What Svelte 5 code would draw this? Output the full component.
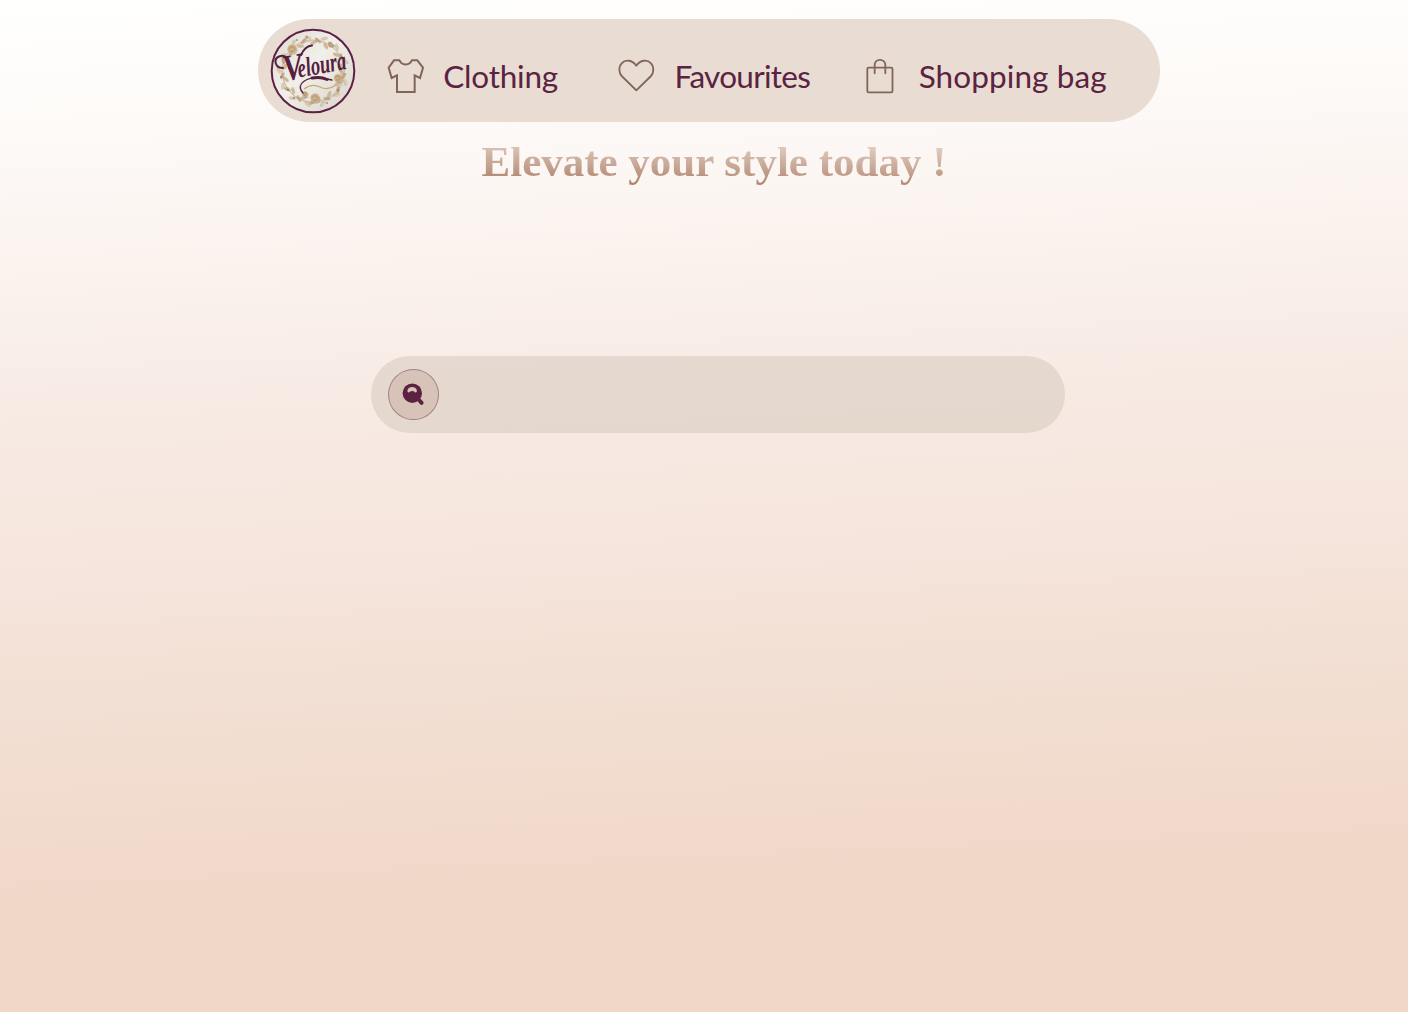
<script>
  // Sprigs of the floral wreath, spread around the emblem
  const sprigs = Array.from({ length: 40 }, (_, i) => {
    const angle = i * 9;
    const rad = (angle * Math.PI) / 180;
    const r = 28.5 + (i % 3) * 3;
    return { x: 43 + r * Math.cos(rad), y: 43 + r * Math.sin(rad), angle: angle + 55 + (i % 2) * 60, tone: i % 3 };
  });
  const blooms = [
    [22, 21, 4.6], [68, 50, 4], [45, 70, 4.6], [35, 66, 2.8], [60, 16, 2.4]
  ];
  const berries = [
    [27, 12], [11, 49], [18, 62], [72, 29], [68, 62], [37, 9], [24, 70], [57, 75]
  ];
</script>

<main>
  <nav>
    <a class="logo" href="#home" aria-label="Veloura">
      <svg width="86" height="86" viewBox="0 0 86 86">
        <defs>
          <linearGradient id="paper" x1="0" y1="0" x2="1" y2="1">
            <stop offset="0" stop-color="#dddad2" />
            <stop offset=".45" stop-color="#f1efe9" />
            <stop offset="1" stop-color="#d9d4c9" />
          </linearGradient>
        </defs>
        <circle cx="43" cy="43" r="41.3" fill="url(#paper)" stroke="#5b2145" stroke-width="2" />
        <circle class="vine-shadow" cx="43.8" cy="44" r="31" />
        <circle class="vine" cx="43" cy="43" r="31" />
        {#each sprigs as s}
          <g transform="translate({s.x} {s.y}) rotate({s.angle})">
            <ellipse class="shade" cx=".8" cy="1" rx="3.4" ry="1.3" />
            <ellipse class="leaf tone{s.tone}" rx="3.4" ry="1.2" />
          </g>
        {/each}
        {#each blooms as [x, y, r]}
          <g transform="translate({x} {y})">
            <circle class="shade" cx="1" cy="1.2" {r} />
            <circle class="bloom" {r} />
            <path class="petal" d="M-{r * 0.7} 0Q0 -{r} {r * 0.7} 0M-{r * 0.5} 1.2Q0 {r} {r * 0.6} 0" />
          </g>
        {/each}
        {#each berries as [x, y]}
          <circle class="berry" cx={x} cy={y} r=".8" />
        {/each}
        <path class="ribbon" d="M34 61Q42 55 50 59T66 57" />
        <path class="swash" d="M13 40C5 40 3 31 9 28.5C15 26 20 31 19 40" />
        <path class="swash thin" d="M33 65C24 55 39 49 50 49.5Q57 51 62 52" />
        <path class="swash thick" d="M42 50Q51 48.5 57 51.5" />
        <path class="swash" d="M31 27Q35 18 42 17.5" />
        <g transform="translate(15 53) rotate(-10)">
          <text class="word initial" textLength="20" lengthAdjust="spacingAndGlyphs">V</text>
          <text class="word" x="14.5" y="-1" textLength="49" lengthAdjust="spacingAndGlyphs">eloura</text>
        </g>
      </svg>
    </a>

    <a class="item clothing" href="#clothing">
      <svg width="38" height="36" viewBox="32 36 114 108">
        <path stroke-width="6" d="M53 43H69L74 50Q88 61 102 50L107 43H123L140 65L131 96L115 88V138H62V88L46 96L37 65Z" />
      </svg>
      <span>Clothing</span>
    </a>

    <a class="item favourites" href="#favourites">
      <svg width="38" height="36" viewBox="50 36 114 108">
        <path stroke-width="5.4" stroke-linejoin="round" d="M108 133L64 90C56 82 54 62 64 52C75 40 96 41 108 59C120 41 141 40 152 52C162 62 160 82 152 90Z" />
      </svg>
      <span>Favourites</span>
    </a>

    <a class="item bag" href="#bag">
      <svg width="28" height="36" viewBox="49 123 84 108">
        <rect x="53" y="152" width="75.5" height="74" rx="4" stroke-width="5.4" />
        <path stroke-width="5.4" stroke-linecap="round" d="M75 169V145C75 123 107 123 107 145V169" />
      </svg>
      <span>Shopping bag</span>
    </a>
  </nav>

  <h1>Elevate your style today !</h1>

  <form class="search" onsubmit={(e) => e.preventDefault()}>
    <button aria-label="Search">
      <svg width="24" height="24" viewBox="0.4 -0.5 24 24">
        <path d="M17 17L20 20.3" stroke="#5b2341" stroke-width="4" stroke-linecap="round" />
        <circle cx="10.7" cy="10.7" r="9.7" fill="#5b2341" />
        <path d="M5.8 8.6C5.8 3.1 15.3 3.1 15.3 8.6C15.3 10.2 13.4 10.2 12.8 9.2C12 8.2 9.4 8.2 8.3 9.2C7.7 10.2 5.8 10.2 5.8 8.6Z" fill="#d8c3b8" />
      </svg>
    </button>
    <input type="text" aria-label="Search products" />
  </form>
</main>

<style>
  :global(body) {
    margin: 0;
  }

  main {
    box-sizing: border-box;
    min-height: 1012px;
    padding-top: 19px;
    display: flex;
    flex-direction: column;
    overflow: hidden;
    background: linear-gradient(
      177.6deg,
      #fffffe 1%,
      #fcf7f4 18%,
      #fbf3ee 25%,
      #f8ece6 36%,
      #f5e4db 56%,
      #f2ded1 70%,
      #f0d7c8 86%
    );
  }

  nav {
    box-sizing: border-box;
    width: 902px;
    height: 103px;
    margin-left: 258px;
    padding-left: 12px;
    border-radius: 52px;
    background: #e8dcd3;
    display: flex;
    align-items: center;
  }

  .logo {
    display: flex;
    width: 86px;
  }

  .logo svg {
    overflow: visible;
  }

  .vine,
  .vine-shadow {
    fill: none;
    stroke: #c2a078;
    stroke-width: 0.6;
  }

  .vine-shadow {
    stroke: #aaa18f;
    opacity: 0.6;
  }

  .shade {
    fill: #8c8170;
    opacity: 0.35;
  }

  .leaf {
    fill: #d2b58e;
  }

  .leaf.tone1 {
    fill: #c2a57e;
  }

  .leaf.tone2 {
    fill: #dfcbab;
  }

  .bloom {
    fill: #cfb08a;
  }

  .petal {
    fill: none;
    stroke: #a88662;
    stroke-width: 0.8;
  }

  .berry {
    fill: #81506a;
  }

  .ribbon {
    fill: none;
    stroke: #c9a57b;
    stroke-width: 1.3;
  }

  .swash {
    fill: none;
    stroke: #56203f;
    stroke-width: 2;
    stroke-linecap: round;
  }

  .swash.thin {
    stroke-width: 1.3;
  }

  .swash.thick {
    stroke-width: 2.8;
  }

  .word {
    font: italic bold 27px "Liberation Serif", serif;
    fill: #56203f;
  }

  .word.initial {
    font-size: 37px;
  }

  .item {
    display: flex;
    align-items: center;
    color: #5b2341;
    font: 31.5px/36px Lato, sans-serif;
    text-decoration: none;
    white-space: nowrap;
    padding-top: 10px;
  }

  .item svg {
    flex: none;
    fill: none;
    stroke: #80655a;
  }

  .clothing {
    width: 230px;
    margin-left: 30.6px;
    gap: 18.6px;
  }

  .clothing span {
    letter-spacing: -0.2px;
  }

  .favourites {
    width: 249.6px;
    gap: 20px;
  }

  .favourites span {
    letter-spacing: -0.7px;
  }

  .bag {
    gap: 24.5px;
  }

  .bag span {
    letter-spacing: 0.1px;
  }

  h1 {
    align-self: flex-start;
    margin: 14.5px 0 0 481.5px;
    font: bold 43px/50px "Liberation Serif", serif;
    color: transparent;
    white-space: nowrap;
    background: linear-gradient(181deg, #e2d0c5 16%, #c5a492 60%, #ad806a 92%);
    -webkit-background-clip: text;
    background-clip: text;
  }

  .search {
    box-sizing: border-box;
    width: 693.5px;
    height: 77px;
    margin: 169.3px 0 0 371.3px;
    padding: 0 17px;
    display: flex;
    align-items: center;
    border-radius: 39px;
    background: linear-gradient(177deg, #e6d9d1, #e4d7cc);
  }

  button {
    box-sizing: border-box;
    width: 50.5px;
    height: 51px;
    padding: 0;
    display: flex;
    align-items: center;
    justify-content: center;
    border: 1px solid #a18088;
    border-radius: 50%;
    background: #d8c3b8;
  }

  input {
    flex: 1;
    min-width: 0;
    height: 44px;
    border: 0;
    outline: 0;
    background: transparent;
    color: #5b2341;
    font: 22px Lato, sans-serif;
  }
</style>
